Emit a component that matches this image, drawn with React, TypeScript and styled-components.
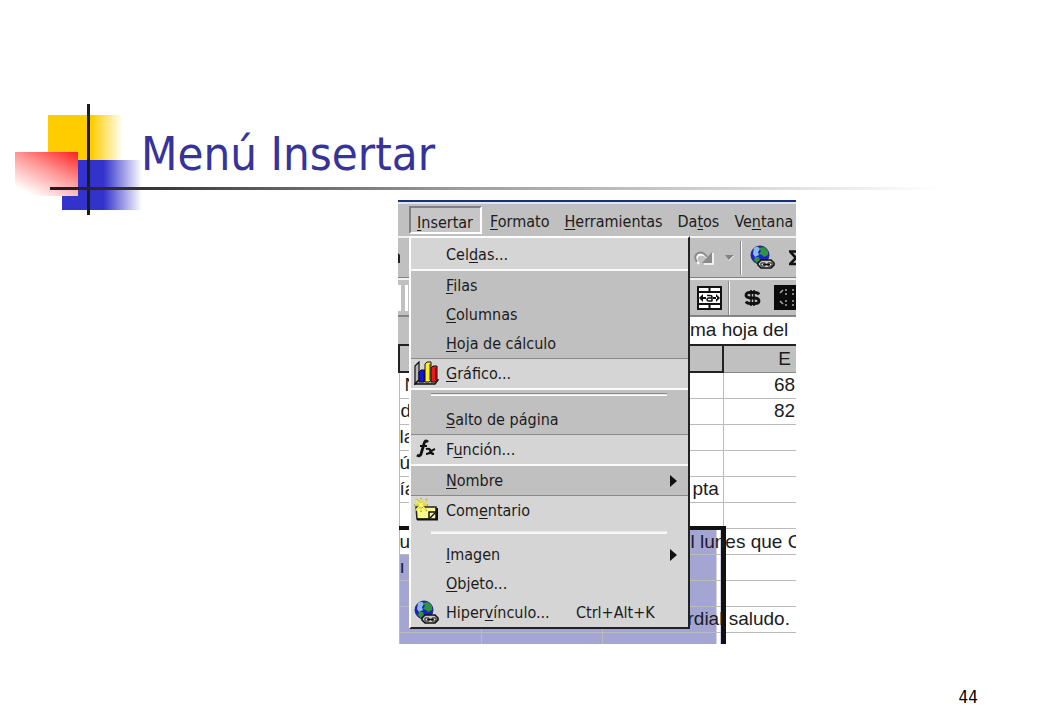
import React from "react";
import styled, { createGlobalStyle, css } from "styled-components";

const UI_FONT = '"DejaVu Sans Condensed", "DejaVu Sans", sans-serif';
const SHEET_FONT = '"Liberation Sans", Arial, sans-serif';
const FACE = "#c0c0c0";
const FACE_LIGHT = "#d5d5d5";
const INK = "#1c1c1c";
const SELECTED = "#a5a5d3";

const GlobalStyle = createGlobalStyle`
  *, *::before, *::after { box-sizing: border-box; }
  body { margin: 0; background: #fff; }
  button { font: inherit; color: inherit; background: none; border: 0; margin: 0; padding: 0; text-align: left; }
`;

const Slide = styled.main`
  display: flex;
  flex-direction: column;
  min-height: 100vh;
  font-family: ${UI_FONT};
  color: ${INK};
  overflow: hidden;
`;

const Header = styled.header`
  position: relative;
  padding: 120px 100px 0 141px;
`;

const Ornament = styled.svg`
  position: absolute;
  left: 15px;
  top: 104px;
`;

const Title = styled.h1`
  margin: 0;
  font-size: 47px;
  line-height: 67px;
  font-weight: 400;
  color: #363399;
`;

const Rule = styled.div`
  position: relative;
  height: 3px;
  margin: 0 100px 0 50px;
  background: linear-gradient(to right, #1c1c1c, #333 10%, #9a9a9a 45%, #fff);
`;

const Capture = styled.section`
  position: relative;
  width: 398px;
  max-width: 100%;
  height: 444px;
  margin: 10px 0 0 398px;
  overflow: hidden;
  background: #fff;
`;

const TitleStrip = styled.div`
  height: 4px;
  background: #e4e4ec;
  border-top: 2px solid #1d2f7a;
`;

const MenuBar = styled.nav`
  display: flex;
  align-items: flex-start;
  height: 32px;
  padding: 2px 0 0 11px;
  background: ${FACE};
  font-size: 16px;
  line-height: 20px;
  white-space: nowrap;
`;

const MenuTab = styled.button<{ $open?: boolean }>`
  display: flex;
  height: 28px;
  padding: 6px 7px 0 8px;
  ${(p) =>
    p.$open &&
    css`
      background: #c6c6c6;
      border: 2px solid #fff;
      border-top-color: #808080;
      border-left-color: #808080;
      padding: 5px 7px 0 6px;
    `}
`;

const Mnemonic = styled.span`
  text-decoration: underline;
  text-underline-offset: 2px;
`;

const Band = styled.div<{ $height: number }>`
  display: grid;
  grid-template-columns: 11px 281px 1fr;
  height: ${(p) => p.$height}px;
  background: ${FACE};
  border-top: 2px solid #f2f2f2;
  border-bottom: 1px solid #808080;
`;

const BandEnd = styled.div`
  grid-column: 3;
  display: flex;
  align-items: center;
  white-space: nowrap;
`;

const BandStart = styled.div`
  grid-column: 1;
  display: flex;
  align-items: center;
`;

const Tool = styled.button<{ $width: number }>`
  flex: none;
  display: flex;
  align-items: center;
  justify-content: center;
  width: ${(p) => p.$width}px;
  height: 28px;
`;

const Divider = styled.span`
  flex: none;
  width: 2px;
  height: 34px;
  background: linear-gradient(to right, #888 1px, #fff 1px);
`;

const Formula = styled.div`
  display: grid;
  grid-template-columns: 292px 1fr;
  height: 28px;
  border-top: 1px solid #888;
  background: linear-gradient(to right, ${FACE} 11px, #fff 11px);
  font-family: ${SHEET_FONT};
  font-size: 19px;
  line-height: 26px;
  white-space: nowrap;
`;

const FormulaText = styled.span`
  grid-column: 2;
`;

const Sheet = styled.table`
  width: 447px;
  table-layout: fixed;
  border-collapse: collapse;
  font-family: ${SHEET_FONT};
  font-size: 19px;
  line-height: 20px;
`;

const HeadCell = styled.th<{ $active?: boolean }>`
  height: 27px;
  padding: 0;
  font-weight: 400;
  background: ${FACE};
  border: 2px solid #222;
  border-bottom: ${(p) => (p.$active ? "2px solid #222" : "1px solid #888")};
`;

const Cell = styled.td<{
  $selected?: boolean;
  $edge?: boolean;
  $top?: boolean;
  $center?: boolean;
  $indent?: number;
}>`
  height: 26px;
  padding: 0 0 0 ${(p) => p.$indent ?? 0}px;
  border: 1px solid #bbb;
  white-space: nowrap;
  text-align: ${(p) => (p.$center ? "center" : "left")};
  ${(p) => p.$selected && css`background: ${SELECTED};`}
  ${(p) => p.$top && css`border-top: 4px solid #111;`}
  ${(p) =>
    p.$edge &&
    css`
      border-right: 5px solid #111;
      background: linear-gradient(to left, #fff 4px, ${SELECTED} 4px);
    `}
`;

const Menu = styled.div`
  position: absolute;
  left: 11px;
  top: 36px;
  width: 281px;
  background: ${FACE};
  border: 2px solid #fff;
  border-right-color: #222;
  border-bottom-color: #222;
  font-size: 16px;
  line-height: 20px;
`;

const Group = styled.div<{ $raised?: boolean; $first?: boolean; $last?: boolean }>`
  ${(p) =>
    p.$raised &&
    css`
      background: ${FACE_LIGHT};
      border-top: 1px solid #8a8a8a;
      border-bottom: 2px solid #fafafa;
    `}
  ${(p) => p.$first && css`border-top: 0; padding: 2px 0 0;`}
  ${(p) => p.$last && css`border-bottom: 0;`}
`;

const Item = styled.button`
  display: grid;
  grid-template-columns: 35px 130px 1fr 18px;
  align-items: center;
  width: 100%;
  height: 29px;
  white-space: nowrap;
`;

const ItemIcon = styled.span`
  display: flex;
  padding-left: 3px;
`;

const Separator = styled.hr<{ $etched?: boolean }>`
  height: 3px;
  border: 0;
  margin: 0 21px 0 20px;
  background: ${(p) =>
    p.$etched ? "linear-gradient(#888 1px, #d0d0d0 1px, #fff 2px)" : "linear-gradient(#e8e8e8, #fff)"};
`;

const SeparatorRow = styled.div<{ $etched?: boolean }>`
  height: 15px;
  padding-top: ${(p) => (p.$etched ? 3 : 6)}px;
`;

const PageNumber = styled.footer`
  margin-top: auto;
  padding: 0 62px 13px 0;
  text-align: right;
  font-size: 17px;
  line-height: 20px;
  color: #000;
`;

/* A label whose character at index `at` is underlined as its keyboard shortcut. */
function Label({ text, at }: { text: string; at: number }) {
  return (
    <span>
      {text.slice(0, at)}
      <Mnemonic>{text[at]}</Mnemonic>
      {text.slice(at + 1)}
    </span>
  );
}

function GlobeIcon() {
  return (
    <svg width="26" height="26" viewBox="0 0 26 26" aria-hidden="true">
      <circle cx="10" cy="10" r="9" fill="#1822c8" stroke="#222a70" strokeWidth="1" />
      <path d="M4 3 Q8 0 10 4 L8 7 L9 10 L5 12 L3 9Z" fill="#8fb8e8" />
      <path d="M9 3 L14 2 L18 6 L18 10 L14 12 L12 10 L9 9 L11 6Z M5 12 L9 12 L10 16 L7 18 L4 15Z" fill="#2f9440" />
      <path d="M12 15 h9 l3 3 v2 l-3 3 h-10 l-3 -3 v-2 l3 -3z" fill="#c8c8c8" stroke="#111" strokeWidth="1.6" />
      <path d="M11 18 h4 v3 h-4z M18 18 h4 v3 h-4z" fill="#f2f2f2" stroke="#111" strokeWidth="1" />
      <path d="M13 19.5 h7" stroke="#111" strokeWidth="1.4" />
    </svg>
  );
}

function ChartIcon() {
  return (
    <svg width="25" height="25" viewBox="0 0 25 25" aria-hidden="true">
      <path d="M1 5 L5 1 V19 L1 23Z" fill="#b8b8b8" stroke="#111" strokeWidth="1.2" />
      <path d="M1 23 L5 19 H24 L21 23Z" fill="#aaa" stroke="#111" strokeWidth="1.4" />
      <path d="M5 11 l2 -2 h4 v10 l-1 2 H5z" fill="#1414e0" stroke="#111" strokeWidth="1" />
      <path d="M11 3 l2 -2 h4 v18 l-2 2 h-4z" fill="#ffee22" stroke="#111" strokeWidth="1" />
      <path d="M17 7 l2 -2 h4 v14 l-2 2 h-4z" fill="#ee1818" stroke="#111" strokeWidth="1" />
      <path d="M9.500 10 v10 M16 3 v16 M21.500 7 v12" stroke="#222" strokeWidth="1" />
    </svg>
  );
}

function FunctionIcon() {
  return (
    <svg width="25" height="22" viewBox="-2 1 25 22" aria-hidden="true" fill="none" stroke="#111">
      <path d="M12 4 Q9 1 8 6 L5 16 Q4 19 1 17" strokeWidth="2.800" />
      <path d="M4 8 H11" strokeWidth="2" />
      <path d="M10 11 Q14 10 14.500 13 T18 16 M19 11 Q16 12 14.500 14 T10 16" strokeWidth="2.200" />
    </svg>
  );
}

function CommentIcon() {
  return (
    <svg width="25" height="25" viewBox="0 0 25 25" aria-hidden="true">
      <path d="M2 9 H22 V21 H3Z" fill="#fbf98b" stroke="#222" strokeWidth="1.5" />
      <path d="M3 21.500 H23 V10" fill="none" stroke="#111" strokeWidth="2" />
      <rect x="15" y="14" width="7" height="7" fill="#f7f7b0" stroke="#111" strokeWidth="1.5" />
      <path d="M16 20 L21 15" stroke="#111" strokeWidth="1.500" />
      <path d="M3 10 H13 L11 13 H4Z" fill="#fbf98b" />
      <path d="M7 0 V14 M0 7 H14 M2 1 L13 13 M13 1 L1 13" stroke="#b5b24a" strokeWidth="1.800" />
      <path d="M7 1 V13 M1 7 H13 M2 2 L12 12 M12 2 L2 12" stroke="#fff85a" strokeWidth="1.200" />
    </svg>
  );
}

function SubmenuArrow() {
  return (
    <svg width="7" height="12" viewBox="0 0 7 12" aria-hidden="true">
      <path d="M0 0 L7 6 L0 12Z" fill="#111" />
    </svg>
  );
}

function RedoIcon() {
  return (
    <svg width="22" height="16" viewBox="0 0 22 16" aria-hidden="true" fill="none">
      <path d="M5 13 Q0 7 5 4 Q10 2 14 8" stroke="#fff" strokeWidth="2" transform="translate(1 1)" />
      <path d="M20 3 V14 H11" stroke="#fff" strokeWidth="1.500" />
      <path d="M4 12 Q0 6 5 3 Q10 1 14 7" stroke="#8b8b8b" strokeWidth="2" />
      <path d="M19 2 V13 H9Z" fill="#8b8b8b" />
    </svg>
  );
}

function DropIcon() {
  return (
    <svg width="11" height="7" viewBox="0 0 11 7" aria-hidden="true">
      <path d="M1 1 H10 L5 6Z" fill="#828282" />
      <path d="M5 6.500 L10 1.500" stroke="#fff" />
    </svg>
  );
}

function SumIcon() {
  return (
    <svg width="14" height="16" viewBox="1 0 14 16" aria-hidden="true">
      <path d="M14 4 V1.500 H2 L8 8 L2 14 H14 V11" fill="none" stroke="#111" strokeWidth="2.600" />
    </svg>
  );
}

function MergeIcon() {
  return (
    <svg width="25" height="24" viewBox="0 0 25 24" aria-hidden="true">
      <rect x="1" y="1" width="23" height="22" fill="#fff" stroke="#111" strokeWidth="2" />
      <path d="M1 6 H24 M1 18 H24 M12.500 1 V6 M12.500 18 V23" stroke="#111" strokeWidth="2" />
      <path d="M2 12 L6 8 V16Z M23 12 L19 8 V16Z M5 11 h4 v2 h-4z M16 11 h4 v2 h-4z" fill="#111" />
      <path d="M10 9.500 H13 Q15 9.500 15 11 V15.500 M15 12 H12 Q10 12 10 14 Q10 15 12 15 H15" fill="none" stroke="#111" strokeWidth="1.5" />
    </svg>
  );
}

function CurrencyIcon() {
  return (
    <svg width="17" height="18" viewBox="0 0 17 18" aria-hidden="true" fill="none" stroke="#111">
      <path d="M15 5.500 Q14 3.500 11 3.500 H6 Q2 3.500 2 6 Q2 8.500 6 9 H11 Q15 9.500 15 12 Q15 14.500 11 14.500 H6 Q3 14.500 2 12.500" strokeWidth="2.800" />
      <path d="M7 1 V17 M10 1 V17" strokeWidth="1.600" />
    </svg>
  );
}

function PatternIcon() {
  return (
    <svg width="36" height="25" viewBox="0 0 36 25" aria-hidden="true">
      <rect width="36" height="25" fill="#0b0b0b" />
      <path
        d="M6 8 l3 -3 M12 4 v2 M12 8 v2 M19 4 v2 M19 8 v2 M6 16 l3 3 M12 15 v2 M12 19 v2 M19 15 v2 M19 19 v2"
        stroke="#aaa"
        strokeWidth="1.500"
      />
    </svg>
  );
}

function EdgeIcon() {
  return (
    <svg width="10" height="26" viewBox="0 0 10 26" aria-hidden="true">
      <path d="M0 0 H3 V26 H0Z M7 0 H10 V26 H7Z" fill="#fff" />
    </svg>
  );
}

function PasteEdgeIcon() {
  return (
    <svg width="3" height="12" viewBox="0 0 3 12" aria-hidden="true">
      <path d="M0 1 L2 3 V11 H0Z" fill="#222" />
    </svg>
  );
}

type Entry = { text: string; at: number; icon?: React.ReactNode; keys?: string; sub?: boolean };

function MenuEntry({ text, at, icon, keys, sub }: Entry) {
  return (
    <Item type="button" role="menuitem">
      <ItemIcon>{icon}</ItemIcon>
      <Label text={text} at={at} />
      <span>{keys}</span>
      {sub && <SubmenuArrow />}
    </Item>
  );
}

const tabs = [
  { text: "Insertar", at: 0, open: true },
  { text: "Formato", at: 0 },
  { text: "Herramientas", at: 0 },
  { text: "Datos", at: 2 },
  { text: "Ventana", at: 2 },
];

type Row = { a?: string; indent?: number; d?: string; dIndent?: number; e?: string; selected?: boolean; top?: boolean };

const rows: Row[] = [
  { a: "N", indent: 5, e: "68" },
  { a: "d", indent: 1, e: "82" },
  { a: "la" },
  { a: "ús" },
  { a: "ía", d: "pta", dIndent: 90 },
  {},
  { a: "ur", d: "l lunes que C", dIndent: 88, selected: true, top: true },
  { a: "ı", selected: true },
  { selected: true },
  { d: "rdial saludo.", dIndent: 85, selected: true },
  { selected: true },
];

export default function App() {
  return (
    <Slide>
      <GlobalStyle />
      <Header>
        <Ornament width="130" height="111" viewBox="0 0 130 111" aria-hidden="true">
          <defs>
            <linearGradient id="yellow">
              <stop offset="0.580" stopColor="#ffcc00" />
              <stop offset="1" stopColor="#ffcc00" stopOpacity="0" />
            </linearGradient>
            <linearGradient id="blue">
              <stop offset="0.520" stopColor="#3333cc" />
              <stop offset="1" stopColor="#3333cc" stopOpacity="0" />
            </linearGradient>
            <linearGradient id="red" x1="1" y1="0" x2="0.300" y2="1">
              <stop offset="0" stopColor="#ff2020" />
              <stop offset="0.500" stopColor="#ff9a9a" />
              <stop offset="1" stopColor="#fff" />
            </linearGradient>
          </defs>
          <rect x="33" y="11" width="75" height="46" fill="url(#yellow)" />
          <rect x="47" y="56" width="80" height="50" fill="#fff" />
          <rect x="47" y="56" width="80" height="50" fill="url(#blue)" />
          <rect x="0" y="48" width="63" height="44" fill="url(#red)" />
          <rect x="72" y="0" width="3" height="111" fill="#1c1c1c" />
        </Ornament>
        <Title>Menú Insertar</Title>
      </Header>
      <Rule />
      <Capture>
        <TitleStrip />
        <MenuBar>
          {tabs.map((t) => (
            <MenuTab key={t.text} type="button" $open={t.open}>
              <Label text={t.text} at={t.at} />
            </MenuTab>
          ))}
        </MenuBar>
        <Band $height={42}>
          <BandStart><PasteEdgeIcon /></BandStart>
          <BandEnd>
            <Tool type="button" aria-label="Rehacer" $width={28}><RedoIcon /></Tool>
            <Tool type="button" aria-label="Lista de rehacer" $width={22}><DropIcon /></Tool>
            <Divider />
            <Tool type="button" aria-label="Hipervínculo" $width={42}><GlobeIcon /></Tool>
            <Tool type="button" aria-label="Autosuma" $width={24}><SumIcon /></Tool>
          </BandEnd>
        </Band>
        <Band $height={38}>
          <BandStart><EdgeIcon /></BandStart>
          <BandEnd>
            <Tool type="button" aria-label="Combinar y centrar" $width={38}><MergeIcon /></Tool>
            <Divider />
            <Tool type="button" aria-label="Moneda" $width={44}><CurrencyIcon /></Tool>
            <Tool type="button" aria-label="Estilo" $width={36}><PatternIcon /></Tool>
          </BandEnd>
        </Band>
        <Formula>
          <FormulaText>ma hoja del</FormulaText>
        </Formula>
        <Sheet>
          <colgroup>
            <col style={{ width: 82 }} />
            <col style={{ width: 121 }} />
            <col style={{ width: 121 }} />
            <col style={{ width: 123 }} />
          </colgroup>
          <thead>
            <tr>
              <HeadCell $active />
              <HeadCell $active />
              <HeadCell $active />
              <HeadCell>E</HeadCell>
            </tr>
          </thead>
          <tbody>
            {rows.map((r, i) => (
              <tr key={i}>
                <Cell $selected={r.selected && !r.top} $top={r.top} $indent={r.indent}>{r.a}</Cell>
                <Cell $selected={r.selected} $top={r.top} />
                <Cell $selected={r.selected} $top={r.top} $edge={r.selected} $indent={r.dIndent}>{r.d}</Cell>
                <Cell $center>{r.e}</Cell>
              </tr>
            ))}
          </tbody>
        </Sheet>
        <Menu role="menu" aria-label="Insertar">
          <Group $raised $first>
            <MenuEntry text="Celdas..." at={3} />
          </Group>
          <Group>
            <MenuEntry text="Filas" at={0} />
            <MenuEntry text="Columnas" at={0} />
            <MenuEntry text="Hoja de cálculo" at={0} />
          </Group>
          <Group $raised>
            <MenuEntry text="Gráfico..." at={0} icon={<ChartIcon />} />
          </Group>
          <Group>
            <SeparatorRow $etched><Separator $etched /></SeparatorRow>
            <MenuEntry text="Salto de página" at={0} />
          </Group>
          <Group $raised>
            <MenuEntry text="Función..." at={1} icon={<FunctionIcon />} />
          </Group>
          <Group>
            <MenuEntry text="Nombre" at={0} sub />
          </Group>
          <Group $raised $last>
            <MenuEntry text="Comentario" at={3} icon={<CommentIcon />} />
            <SeparatorRow><Separator /></SeparatorRow>
            <MenuEntry text="Imagen" at={0} sub />
            <MenuEntry text="Objeto..." at={0} />
            <MenuEntry text="Hipervínculo..." at={5} icon={<GlobeIcon />} keys="Ctrl+Alt+K" />
          </Group>
        </Menu>
      </Capture>
      <PageNumber>44</PageNumber>
    </Slide>
  );
}
